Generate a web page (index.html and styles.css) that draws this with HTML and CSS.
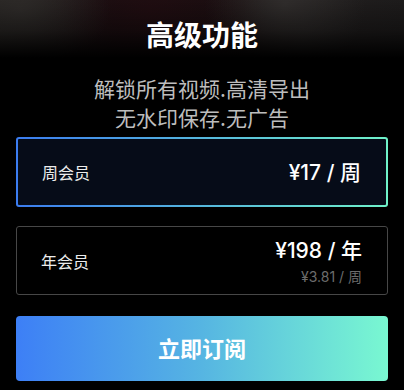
FILE: index.html
```html
<!DOCTYPE html>
<html lang="zh-CN">
<head>
<meta charset="utf-8">
<title>高级功能</title>
<link rel="stylesheet" href="styles.css">
</head>
<body>
<div class="page">
  <h1 class="title">高级功能</h1>
  <p class="subtitle">解锁所有视频.高清导出<br>无水印保存.无广告</p>
  <div class="plans">
    <div class="plan plan--active">
      <span class="plan-name">周会员</span>
      <span class="plan-price">¥17 / 周</span>
    </div>
    <div class="plan plan--year">
      <span class="plan-name">年会员</span>
      <div class="plan-prices">
        <span class="plan-price">¥198 / 年</span>
        <span class="plan-sub">¥3.81 / 周</span>
      </div>
    </div>
  </div>
  <button class="subscribe">立即订阅</button>
</div>
</body>
</html>
```
FILE: styles.css
```css
html, body {
  margin: 0;
  padding: 0;
  background: #000;
}
body {
  font-family: "Noto Sans CJK SC", "Noto Sans", sans-serif;
  color: #fff;
}
.page {
  width: 404px;
  height: 390px;
  box-sizing: border-box;
  padding-top: 16px;
  display: flex;
  flex-direction: column;
  align-items: stretch;
  background:
    linear-gradient(180deg, rgba(0,0,0,0) 0px, rgba(0,0,0,0.35) 30px, #000 58px),
    radial-gradient(ellipse 90px 60px at 20px 10px, #2e2b29 0%, rgba(30,28,27,0) 100%),
    radial-gradient(ellipse 80px 70px at 285px 5px, #302d2c 0%, rgba(30,28,27,0) 100%),
    radial-gradient(ellipse 120px 70px at 150px 10px, #200d11 0%, rgba(20,8,10,0) 100%),
    linear-gradient(90deg, #24211f 0%, #160d0f 30%, #180f10 60%, #211e1e 75%, #1d1b1b 100%);
}
.title {
  margin: 0;
  font-size: 28px;
  line-height: 36px;
  font-weight: 700;
  text-align: center;
  color: #fff;
}
.subtitle {
  margin: 22px 0 0;
  font-size: 21px;
  line-height: 29px;
  font-weight: 400;
  text-align: center;
  color: #bdbdbd;
}
.plans {
  margin: 5px 16px 0;
  display: flex;
  flex-direction: column;
  gap: 19px;
}
.plan {
  box-sizing: border-box;
  display: flex;
  align-items: center;
  justify-content: space-between;
  padding: 0 25px 0 24px;
  border-radius: 3px;
}
.plan--active {
  height: 70px;
  border: 2px solid transparent;
  background:
    linear-gradient(#060c18, #060c18) padding-box,
    linear-gradient(90deg, #3b7cf0, #6ff2c9) border-box;
}
.plan--year {
  height: 69px;
  border: 1.5px solid #474747;
  background: #000;
}
.plan-name {
  font-size: 16px;
  line-height: 22px;
  color: #ececec;
}
.plan-prices {
  display: flex;
  flex-direction: column;
  align-items: flex-end;
  gap: 5px;
  padding-top: 2px;
}
.plan-price {
  font-family: "Inter", "Noto Sans CJK SC", sans-serif;
  font-size: 21px;
  line-height: 25px;
  font-weight: 500;
  color: #fff;
}
.plan-sub {
  font-family: "Inter", "Noto Sans CJK SC", sans-serif;
  font-size: 14px;
  line-height: 18px;
  color: #6c6c6c;
}
.subscribe {
  margin: 21px 16px 0;
  height: 65px;
  border: none;
  border-radius: 4px;
  background: linear-gradient(90deg, #3d7ff6 0%, #56b5e2 50%, #79f8d1 100%);
  color: #fff;
  font-family: "Noto Sans CJK SC", "Noto Sans", sans-serif;
  font-size: 22px;
  font-weight: 700;
  padding: 0 0 4px;
}
```
